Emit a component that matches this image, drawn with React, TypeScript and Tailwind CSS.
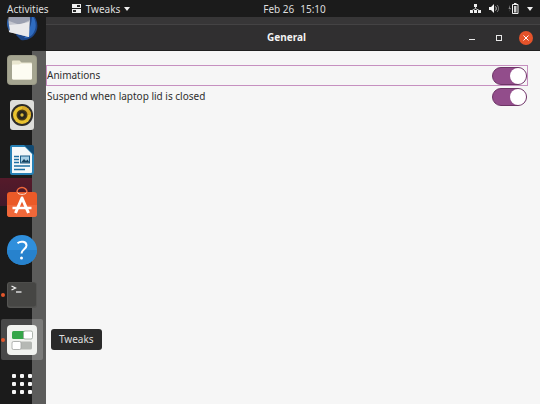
import { useState, type ReactNode } from 'react'

type DockItem = {
  name: string
  icon: ReactNode
  running?: boolean
  active?: boolean
}

function ThunderbirdIcon() {
  return (
    <svg viewBox="0 0 32 32" className="size-8">
      <path d="M16 5h10c5 4 7 12 4 18-3 6-9 9-15 8l-5-5z" fill="#1d4688" />
      <path d="M26 6c4 5 5 12 2 17-2 4-6 6-10 6 5-6 8-14 8-23z" fill="#2f6cc0" />
      <path d="M3 5h20l1 7-1 16-20-5-1-9z" fill="#c3c5cd" />
      <path d="M3 5h20l1 6-10 5-11-4z" fill="#9ba0b0" />
      <path d="M3 16l11-1 9-2v15L3 23z" fill="#e9e9eb" />
      <path d="M2 9c-2 5-1 10 2 13l-1-6z" fill="#2a5fa8" />
    </svg>
  )
}

function FilesIcon() {
  return (
    <svg viewBox="0 0 32 32" className="size-8">
      <rect x="1" y="1" width="30" height="30" rx="4" fill="#9a9a86" />
      <rect x="2" y="2" width="28" height="28" rx="3" fill="#a5a591" />
      <path d="M6 7.500a1 1 0 0 1 1-1h6.500l2 2H25a1 1 0 0 1 1 1V24a1.500 1.500 0 0 1-1.500 1.500h-17A1.500 1.500 0 0 1 6 24z" fill="#e9e6cf" />
      <path d="M6 12c0-1 .5-1.500 1.500-1.500H13l2-1h9.500c1 0 1.500.5 1.500 1.500v13a1.500 1.500 0 0 1-1.500 1.500h-17A1.500 1.500 0 0 1 6 24z" fill="#fdfcf2" />
    </svg>
  )
}

function RhythmboxIcon() {
  return (
    <svg viewBox="0 0 32 32" className="size-8">
      <rect x="4" y="1" width="24" height="30" rx="3" fill="#dededb" />
      <circle cx="16" cy="16" r="11" fill="#2d2b28" />
      <circle cx="16" cy="16" r="9" fill="#e9c22f" />
      <path d="M16 7a9 9 0 0 1 9 9h-9z" fill="#d8a92a" />
      <circle cx="16" cy="16" r="5.500" fill="#4a3a12" />
      <circle cx="16" cy="16" r="4" fill="#28251f" />
      <circle cx="16" cy="16" r="1.700" fill="#d8b63a" />
    </svg>
  )
}

function WriterIcon() {
  return (
    <svg viewBox="0 0 32 32" className="size-8">
      <path d="M6 1h15l7 7v20a3 3 0 0 1-3 3H6a2 2 0 0 1-2-2V3a2 2 0 0 1 2-2z" fill="#2680b5" />
      <path d="M6 3h13l7 7v18a1 1 0 0 1-1 1H6z" fill="#f4f8fa" />
      <path d="M18 1h8a2 2 0 0 1 2 2v8z" fill="#124a72" />
      <path d="M8 12.500h5M8 15.500h5M8 18.500h5M8 22h16M8 25.500h11" stroke="#1d6fa3" strokeWidth="1.500" />
      <rect x="14.500" y="12" width="9" height="7" fill="#a8d0e6" stroke="#1b5c88" />
      <path d="M15 18.500l3-3.500 2 2 1.500-1.500 2 3z" fill="#17425f" />
    </svg>
  )
}

function SoftwareIcon() {
  return (
    <svg viewBox="0 0 32 32" className="size-8 overflow-visible">
      <path d="M11 4V3a5 4.500 0 0 1 10 0v1" fill="none" stroke="#f0673b" strokeWidth="1.500" />
      <rect x="1" y="3" width="30" height="25" rx="3" fill="#ea5a28" />
      <path d="M1 16h30v9a3 3 0 0 1-3 3H4a3 3 0 0 1-3-3z" fill="#f0683a" />
      <path d="M11.500 3.500c.5 2.500 8.500 2.500 9 0" fill="none" stroke="#fbd9c9" />
      <path d="M9.500 24L16 9l6.500 15" fill="none" stroke="#fff" strokeWidth="3" strokeLinejoin="round" />
      <path d="M6.500 19h19" stroke="#fff" strokeWidth="2.500" />
    </svg>
  )
}

function HelpIcon() {
  return (
    <svg viewBox="0 0 32 32" className="size-8">
      <circle cx="16" cy="16" r="15" fill="#2f8fdc" />
      <path d="M1 16a15 15 0 0 0 30 0z" fill="#2782cd" />
      <path d="M11.500 9.200c3-2.500 9-2 9 2.300 0 3.500-5 4-5 8" fill="none" stroke="#fff" strokeWidth="2" />
      <circle cx="15.500" cy="24" r="1.500" fill="#fff" />
    </svg>
  )
}

function TerminalIcon() {
  return (
    <svg viewBox="0 0 32 32" className="size-8">
      <rect x="1" y="3" width="30" height="26" rx="3" fill="#555553" />
      <rect x="2" y="3.500" width="28" height="24" rx="2.500" fill="#464644" />
      <path d="M5.500 7l4 2-4 2" fill="none" stroke="#f2f2f2" strokeWidth="1.300" />
      <path d="M10 13h5.500" stroke="#f2f2f2" strokeWidth="1.300" />
    </svg>
  )
}

function TweaksIcon() {
  return (
    <svg viewBox="0 0 32 32" className="size-8">
      <rect x="1" y="1" width="30" height="30" rx="4" fill="#f1f2ef" />
      <rect x="6" y="7" width="20" height="8" rx="1.500" fill="#36a64a" />
      <rect x="17.500" y="7" width="9" height="8" rx="1.500" fill="#fff" stroke="#9aa39a" strokeWidth=".8" />
      <rect x="6" y="17.500" width="20" height="8" rx="1.500" fill="#b5b8b4" />
      <rect x="6" y="17.500" width="9" height="8" rx="1.500" fill="#fff" stroke="#a2a5a2" strokeWidth=".8" />
    </svg>
  )
}

function AppsIcon() {
  return (
    <svg viewBox="0 0 32 32" className="size-8" fill="#f5f5f5">
      {[6, 14, 22].map((y) =>
        [6, 14, 22].map((x) => <rect key={`${x}-${y}`} x={x} y={y} width="4" height="4" rx="1" />)
      )}
    </svg>
  )
}

const dockItems: DockItem[] = [
  { name: 'Thunderbird Mail', icon: <ThunderbirdIcon /> },
  { name: 'Files', icon: <FilesIcon /> },
  { name: 'Rhythmbox', icon: <RhythmboxIcon /> },
  { name: 'LibreOffice Writer', icon: <WriterIcon /> },
  { name: 'Ubuntu Software', icon: <SoftwareIcon /> },
  { name: 'Help', icon: <HelpIcon /> },
  { name: 'Terminal', icon: <TerminalIcon />, running: true },
  { name: 'Tweaks', icon: <TweaksIcon />, running: true, active: true },
  { name: 'Show Applications', icon: <AppsIcon /> },
]

function TopBar() {
  return (
    <header className="relative z-20 grid h-[17px] shrink-0 grid-cols-[1fr_auto_1fr] items-center bg-[#1b1b1b] px-[7px] text-[10px] leading-none text-[#dedede]">
      <div className="flex items-center gap-[22px]">
        <button type="button">Activities</button>
        <button type="button" className="flex items-center gap-1">
          <svg viewBox="0 0 11 11" className="size-[11px]">
            <path d="M1 1h9v4H1zM1 6h9v4H1z" fill="#efefef" />
            <path d="M6 2h3v2H6zM2 7h3v2H2z" fill="#2b2b2b" />
          </svg>
          Tweaks
          <svg viewBox="0 0 6 4" className="h-1 w-[6px]">
            <path d="M0 0h6L3 4z" fill="#efefef" />
          </svg>
        </button>
      </div>
      <button type="button" className="flex gap-[6px] pl-[49px]">
        <span>Feb 26</span>
        <span>15:10</span>
      </button>
      <button type="button" aria-label="System menu" className="flex items-center gap-2 justify-self-end">
        <svg viewBox="0 0 11 11" className="size-[11px]">
          <path d="M4 1h3v3H4zM0 7h3v3H0zM4 7h3v3H4zM8 7h3v3H8z" fill="#f0f0f0" />
          <path d="M5.500 4v1.500M2 7.500l3.500-2 4 2" fill="none" stroke="#c8c8c8" />
        </svg>
        <svg viewBox="0 0 11 11" className="size-[11px]">
          <path d="M0 4h2l3-3v9L2 7H0z" fill="#f5f5f5" />
          <path d="M6.500 3.500c1 1 1 3 0 4" fill="none" stroke="#dcdcdc" />
          <path d="M8 2c2 2 2 5 0 7" fill="none" stroke="#8a8a8a" />
        </svg>
        <svg viewBox="0 0 11 11" className="size-[11px]">
          <path d="M4.500 1.500H10v9H4.500z" fill="#1b1b1b" stroke="#eee" />
          <path d="M6 0h2.500v1.500H6z" fill="#eee" />
          <path d="M6 3h2.500v6.500H6z" fill="#cfcfcf" />
          <path d="M2 2L.5 6H2L1 9l2-4H2z" fill="#888" />
        </svg>
        <svg viewBox="0 0 6 4" className="h-1 w-[6px]">
          <path d="M0 0h6L3 4z" fill="#f0f0f0" />
        </svg>
      </button>
    </header>
  )
}

function Dock() {
  return (
    <nav aria-label="Dock" className="relative z-10 flex w-[46px] shrink-0 flex-col justify-end bg-[#1b1b1b]">
      <div className="absolute top-[34px] right-0 bottom-0 w-[14px] bg-[#5c5c5b]" />
      <div className="absolute top-[161px] left-0 h-[28px] w-8 bg-linear-to-b from-[#551a2a] to-[#43192a]" />
      {dockItems.map((item) => (
        <div key={item.name} className="relative flex h-[45px] shrink-0 items-center last:h-[42px] last:pt-[2px]">
          {item.active && <div className="absolute inset-y-[2px] left-px w-[42px] rounded-xs bg-white/20" />}
          {item.running && <span className="absolute left-px size-1 rounded-full bg-[#e2562b]" />}
          <button type="button" aria-label={item.name} className="relative ml-[6px]">
            {item.icon}
          </button>
          {item.active && (
            <div
              role="tooltip"
              className="absolute left-[51px] flex h-[21px] items-center rounded-[3px] bg-[#2a2a2a] px-[8px] text-[10px] text-[#dedede]"
            >
              {item.name}
            </div>
          )}
        </div>
      ))}
    </nav>
  )
}

function SettingRow({ id, label, focused }: { id: string; label: string; focused?: boolean }) {
  const [on, setOn] = useState(true)

  return (
    <div className={`flex h-[21px] items-center justify-between border ${focused ? 'border-[#c690c0]' : 'border-transparent'}`}>
      <label htmlFor={id} className="text-[10px] text-[#2e2e2e]">
        {label}
      </label>
      <input
        id={id}
        type="checkbox"
        role="switch"
        checked={on}
        onChange={() => setOn(!on)}
        className="h-[18px] w-[35px] appearance-none rounded-full border border-[#6d3566] bg-[#b5b5b5] outline-none before:block before:size-4 before:rounded-full before:bg-white checked:bg-[#924d8b] checked:before:ml-auto"
      />
    </div>
  )
}

function SettingsWindow() {
  return (
    <main className="flex min-w-0 flex-1 flex-col bg-[#f6f6f6]">
      <div className="h-[7px] shrink-0 bg-[#373637]" />
      <div className="flex h-[27px] shrink-0 items-center border-t border-b border-t-[#444344] border-b-[#1f1f1f] bg-[#302f30] pr-[7px] pl-[62px]">
        <h1 className="flex-1 text-center text-[10px] font-bold text-[#f2f2f2]">General</h1>
        <div className="flex items-center gap-[13px] text-[#e8e8e8]">
          <button type="button" aria-label="Minimize" className="flex size-[14px] items-center justify-center">
            <span className="mt-[3px] h-px w-[6px] bg-current" />
          </button>
          <button type="button" aria-label="Maximize" className="flex size-[14px] items-center justify-center">
            <span className="size-[6px] border border-current" />
          </button>
          <button type="button" aria-label="Close" className="flex size-[14px] items-center justify-center rounded-full bg-[#e5532a]">
            <svg viewBox="0 0 6 6" className="size-[6px]">
              <path d="M.5.5l5 5M5.500.5l-5 5" stroke="#fff" />
            </svg>
          </button>
        </div>
      </div>
      <div className="pt-[14px] pr-3">
        <SettingRow id="animations" label="Animations" focused />
        <SettingRow id="lid-suspend" label="Suspend when laptop lid is closed" />
      </div>
    </main>
  )
}

export default function App() {
  return (
    <div className="flex h-screen flex-col overflow-hidden bg-[#1b1b1b] font-['Noto_Sans',sans-serif]">
      <TopBar />
      <div className="flex min-h-0 flex-1">
        <Dock />
        <SettingsWindow />
      </div>
    </div>
  )
}
